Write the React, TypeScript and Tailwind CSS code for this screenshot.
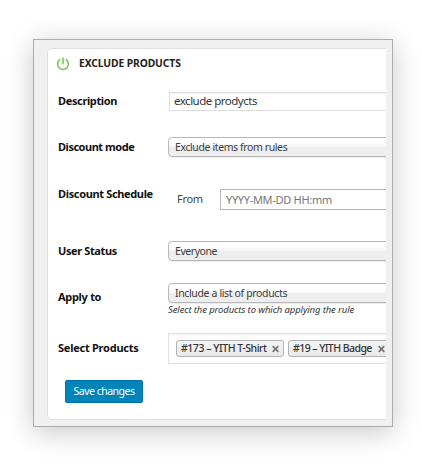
import type { ReactNode } from "react";

function Row({ label, className, labelClass, children }: { label: string; className: string; labelClass: string; children: ReactNode }) {
  return (
    <div className={`flex shrink-0 ${className}`}>
      <div className={`w-[110px] shrink-0 whitespace-nowrap text-[11px] font-bold leading-5 text-[#111] ${labelClass}`}>{label}</div>
      {children}
    </div>
  );
}

function Select({ text, className }: { text: string; className: string }) {
  return (
    <div className="h-5 w-[240px] shrink-0 rounded-[4px] border border-[#b5b8b7] bg-linear-to-b from-white from-20% via-[#f6f6f6] via-50% to-[#eeeeee] to-52% pl-[6px] shadow-[0_1px_0_#ececec]">
      <span className={`block whitespace-nowrap text-[10.5px] leading-[19px] text-[#3c3c3c] ${className}`}>{text}</span>
    </div>
  );
}

function Chip({ text, className, textClass }: { text: string; className: string; textClass: string }) {
  return (
    <div className={`flex h-[17px] shrink-0 items-center justify-between rounded-[3px] border border-[#b4b4b4] bg-linear-to-b from-[#f4f4f4] to-[#e9e9e9] pl-1 pr-[4px] ${className}`}>
      <span className={`whitespace-nowrap text-[10.5px] font-medium leading-[15px] text-[#333] ${textClass}`}>{text}</span>
      <svg width="7" height="8" viewBox="0 0 7 8" fill="none" stroke="#747474" strokeWidth="1.7" className="shrink-0">
        <path d="M.7 1.2l5.6 5.6M6.3 1.2L.7 6.8" />
      </svg>
    </div>
  );
}

export default function App() {
  return (
    <div className="h-[465px] w-[422px] overflow-hidden bg-white pl-[33px] pt-[39px] font-['Noto_Sans',sans-serif]">
      <div className="h-[388px] w-[360px] border border-[#acacac] bg-[#f0f0f0] pl-[13px] pt-2 shadow-[0_5px_26px_rgba(0,0,0,0.22)]">
        <div className="h-[372px] w-[339px] overflow-hidden">
          <div className="flex h-[372px] w-[370px] flex-col rounded-[5px] border border-[#dfdfdf] bg-white pl-[10px]">
            <div className="flex h-[30px] shrink-0 items-center">
              <svg width="14" height="14" viewBox="0 0 14 14" fill="none" stroke="#7ac65b" strokeWidth="1.6" className="-ml-[2px]">
                <path d="M7 .6v6.6M4.3 2.2a5.5 5.5 0 1 0 5.4 0" />
              </svg>
              <h2 className="ml-[9px] whitespace-nowrap text-[10.3px] font-bold tracking-[-0.1px] text-[#222]">EXCLUDE PRODUCTS</h2>
            </div>

            <Row label="Description" className="mt-[13px] h-[19px]" labelClass="-mt-px tracking-[-0.36px]">
              <div className="ml-px h-[19px] w-[240px] border border-[#dddddd] pl-1 shadow-[inset_0_1px_1px_rgba(0,0,0,0.05)]">
                <span className="block whitespace-nowrap text-[11.5px] leading-[16px] tracking-[-0.5px] text-[#32373c]">exclude prodycts</span>
              </div>
            </Row>

            <Row label="Discount mode" className="mt-[26px] h-5" labelClass="tracking-[-0.48px]">
              <Select text="Exclude items from rules" className="tracking-[-0.39px]" />
            </Row>

            <Row label="Discount Schedule" className="mt-[26px] h-[27px]" labelClass="pt-px tracking-[-0.35px]">
              <span className="ml-[9px] mt-[6px] w-[43px] shrink-0 text-[11px] leading-[20px] tracking-[-0.3px] text-[#444]">From</span>
              <div className="mt-[6px] h-[21px] w-[190px] shrink-0 border border-[#b5b5b5] pl-[5px]">
                <span className="block whitespace-nowrap text-[11px] leading-[19px] tracking-[-0.3px] text-[#72777c]">YYYY-MM-DD HH:mm</span>
              </div>
            </Row>

            <Row label="User Status" className="mt-[31px] h-5" labelClass="tracking-[-0.38px]">
              <Select text="Everyone" className="tracking-[-0.45px]" />
            </Row>

            <Row label="Apply to" className="mt-[22px] h-[34px]" labelClass="pt-[4px] tracking-[-0.3px]">
              <div>
                <Select text="Include a list of products" className="tracking-[-0.36px]" />
                <p className="whitespace-nowrap text-[9.5px] italic leading-[14px] tracking-[-0.12px] text-[#333]">Select the products to which applying the rule</p>
              </div>
            </Row>

            <Row label="Select Products" className="mt-4 h-[31px]" labelClass="pt-[5px] tracking-[-0.25px]">
              <div className="flex w-[250px] shrink-0 gap-1 border border-[#e2e2e2] pl-[7px] pt-[6px] shadow-[inset_0_1px_2px_rgba(0,0,0,0.07)]">
                <Chip text="#173 – YITH T-Shirt" className="w-[108px]" textClass="tracking-[-0.46px]" />
                <Chip text="#19 – YITH Badge" className="w-[102px]" textClass="tracking-[-0.56px]" />
              </div>
            </Row>

            <button className="ml-[7px] mt-4 h-[23px] w-[78px] shrink-0 whitespace-nowrap rounded-[2px] border border-[#0071a8] bg-[#0085ba] text-[10.5px] leading-[21px] tracking-[-0.5px] text-white">Save changes</button>
          </div>
        </div>
      </div>
    </div>
  );
}
